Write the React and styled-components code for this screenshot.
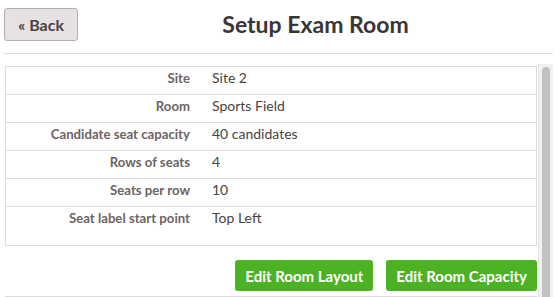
import React from "react";
import styled, { createGlobalStyle } from "styled-components";

const Global = createGlobalStyle`
  html, body { margin: 0; padding: 0; background: #fff; }
  body { font-family: Lato, "Open Sans", sans-serif; color: #4a4242; overflow: hidden; }
  * { box-sizing: border-box; }
`;

const Page = styled.div`
  padding: 8px 7px 0 4px;
`;

const Header = styled.div`
  display: flex;
  align-items: flex-start;
  height: 46px;
  border-bottom: 1px solid #dcdcdc;
`;

const BackButton = styled.button`
  width: 74px;
  height: 33px;
  background: #e6e2e2;
  border: 1px solid #b5b0b0;
  border-radius: 3px;
  font-family: inherit;
  font-weight: 700;
  font-size: 16px;
  color: #4a4242;
  padding: 0;
`;

const Title = styled.h1`
  flex: 1;
  margin: 0;
  text-align: center;
  font-size: 23px;
  font-weight: 700;
  color: #3b3434;
  line-height: 33px;
`;

const Body = styled.div`
  display: flex;
  margin-top: 10px;
  height: 233px;
  overflow: hidden;
`;

const Content = styled.div`
  flex: 1;
  padding: 2px 1px 0 1px;
`;

const ScrollTrack = styled.div`
  width: 15px;
  background: #f1f1f1;
  border-left: 1px solid #e6e6e6;
  padding: 3px 3px 0 3px;
`;

const ScrollThumb = styled.div`
  height: 100%;
  background: #c1c1c1;
  border-radius: 4px 4px 0 0;
`;

const InfoBox = styled.div`
  border: 1px solid #dcdcdc;
  padding-bottom: 10px;
`;

const Row = styled.div`
  display: grid;
  grid-template-columns: 194px 1fr;
  align-items: start;
  height: 28px;
  padding-top: 2px;
  line-height: 18px;
  border-bottom: ${(p) => (p.$last ? "none" : "1px solid #dcdcdc")};
`;

const Label = styled.div`
  text-align: right;
  padding-right: 10px;
  font-weight: 700;
  font-size: 13.2px;
  color: #6e6464;
`;

const Value = styled.div`
  padding-left: 12px;
  font-size: 14px;
  color: #4a4242;
`;

const Actions = styled.div`
  display: flex;
  justify-content: flex-end;
  gap: 13px;
  margin-top: 14px;
  padding-bottom: 5px;
  border-bottom: 1px solid #dcdcdc;
`;

const GreenButton = styled.button`
  height: 31px;
  padding: 0 10px;
  background: #4cb123;
  border: none;
  border-radius: 3px;
  color: #fff;
  font-family: inherit;
  font-weight: 700;
  font-size: 15px;
`;

const rows = [
  ["Site", "Site 2"],
  ["Room", "Sports Field"],
  ["Candidate seat capacity", "40 candidates"],
  ["Rows of seats", "4"],
  ["Seats per row", "10"],
  ["Seat label start point", "Top Left"],
];

export default function App() {
  return (
    <>
      <Global />
      <Page>
        <Header>
          <BackButton>« Back</BackButton>
          <Title>Setup Exam Room</Title>
        </Header>
        <Body>
          <Content>
            <InfoBox>
              {rows.map(([k, v], i) => (
                <Row key={k} $last={i === rows.length - 1}>
                  <Label>{k}</Label>
                  <Value>{v}</Value>
                </Row>
              ))}
            </InfoBox>
            <Actions>
              <GreenButton>Edit Room Layout</GreenButton>
              <GreenButton>Edit Room Capacity</GreenButton>
            </Actions>
          </Content>
          <ScrollTrack>
            <ScrollThumb />
          </ScrollTrack>
        </Body>
      </Page>
    </>
  );
}
